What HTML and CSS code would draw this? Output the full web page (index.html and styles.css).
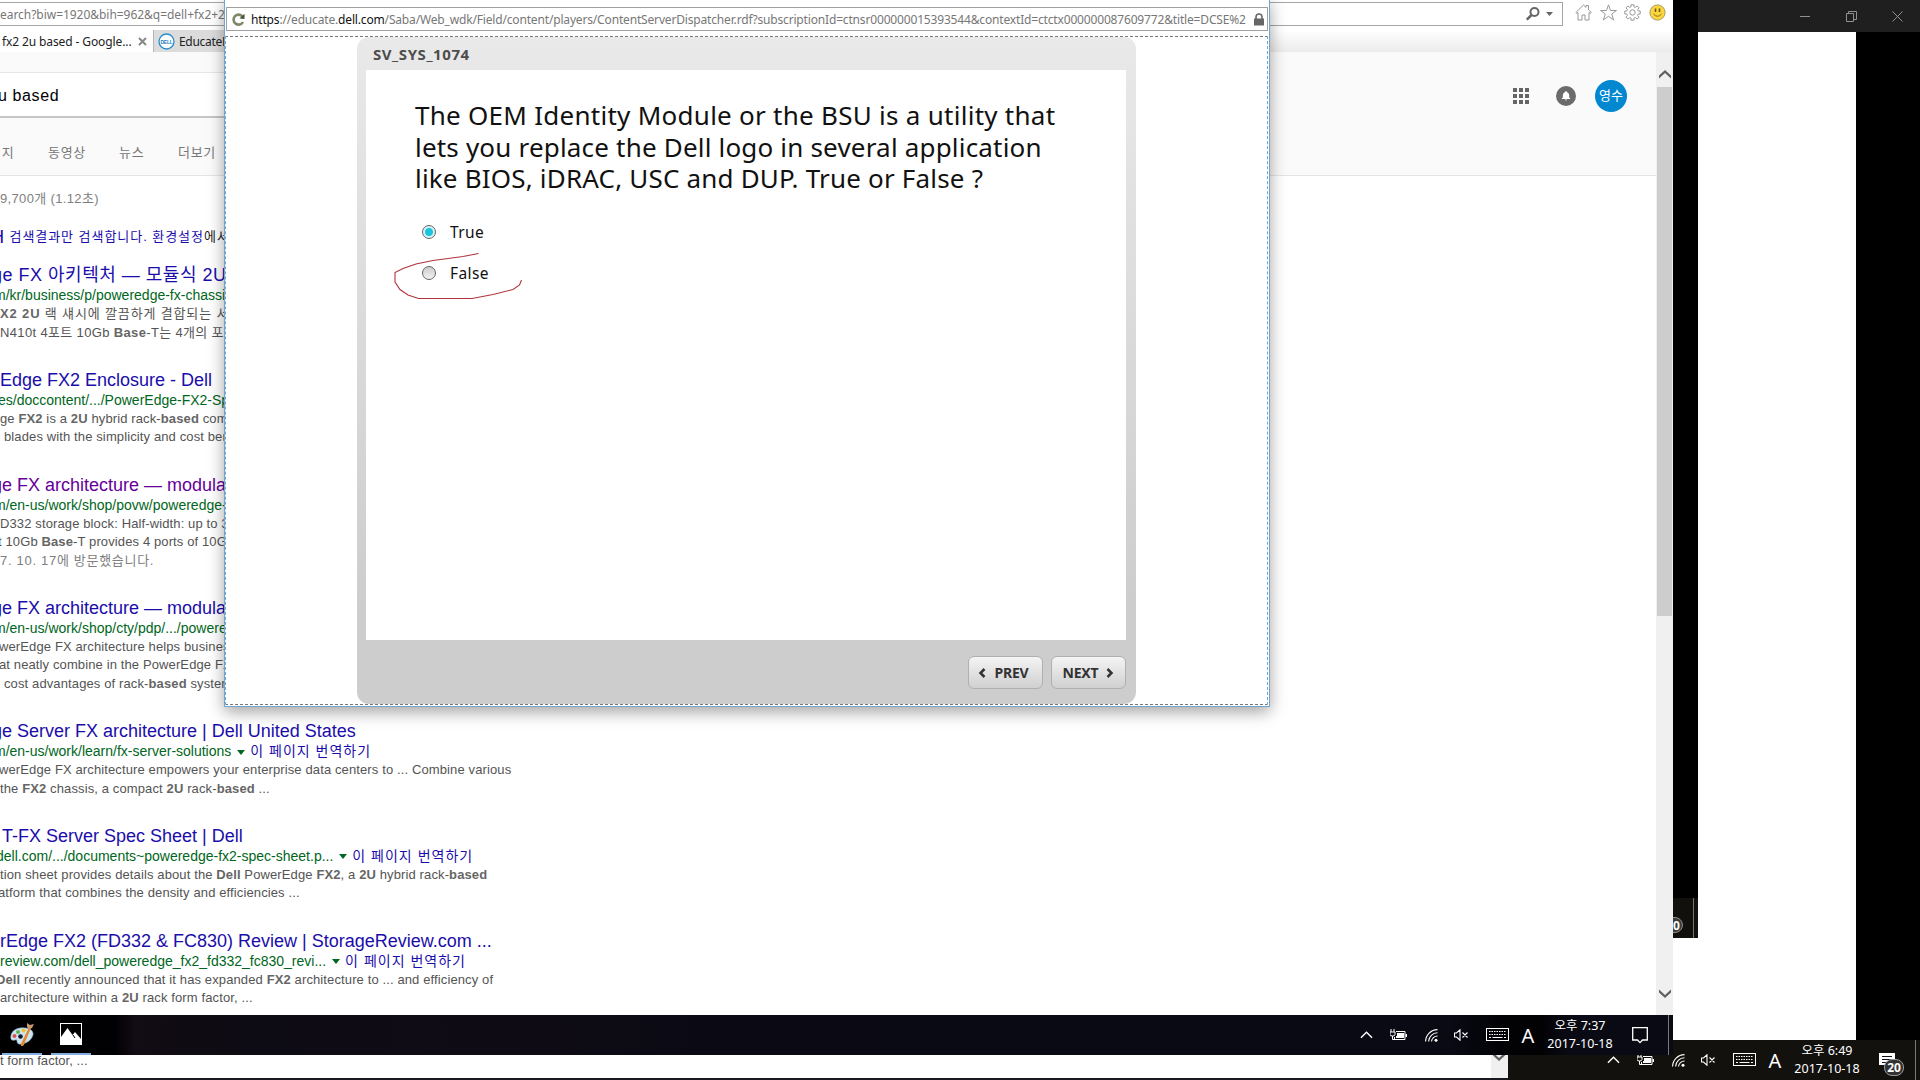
FILE: index.html
```html
<!DOCTYPE html>
<html lang="ko">
<head>
<meta charset="utf-8">
<title>SV_SYS_1074</title>
<link rel="stylesheet" href="styles.css">
</head>
<body>
<svg width="0" height="0" class="defs">
  <symbol id="chev" viewBox="0 0 14 8"><path d="M1 7 7 1l6 6" fill="none" stroke="#fff" stroke-width="1.5"/></symbol>
  <symbol id="battery" viewBox="0 0 17 12"><path d="M1 0v3M4 0v3M0 3h5v2.500q0 1.500-2.500 1.500T0 5.500zM2.500 7v3.500H6" fill="none" stroke="#fff"/><path d="M6 2.500h9v8H4.500V8" fill="none" stroke="#fff"/><path d="M7 4h7v5H6V7h1zM15.500 5h1.500v3h-1.500z" fill="#fff"/></symbol>
  <symbol id="wifi" viewBox="0 0 13 13"><g fill="none" stroke="#fff" stroke-width="1.100"><path d="M.6 12.500A12 12 0 0 1 12.500.6M3.600 12.500A9 9 0 0 1 12.500 3.800M6.500 12.500A6 6 0 0 1 12.500 7"/></g><circle cx="11" cy="11.200" r="1.500" fill="#fff"/></symbol>
  <symbol id="mute" viewBox="0 0 15 12"><path d="M.5 4h2L6 .8v10.400L2.500 8h-2zM8.500 3.500l5 5m0-5-5 5" fill="none" stroke="#fff" stroke-width="1.100"/></symbol>
  <symbol id="keyb" viewBox="0 0 23 13"><rect x=".5" y=".5" width="22" height="12" fill="none" stroke="#fff"/><path d="M3 3.500h17M3 6.500h17" stroke="#fff" stroke-dasharray="1.500 1"/><path d="M3 9.500h2M6.500 9.500h10M18 9.500h2" stroke="#fff"/></symbol>
  <symbol id="down" viewBox="0 0 12 9"><path d="M0 .5 6 6 12 .5V3.500L6 9 0 3.500z" fill="#606060"/></symbol>
</svg>

<div class="desktop">
  <section class="viewer">
    <div class="viewer-bar">
      <svg width="11" height="11" viewBox="0 0 11 11"><path d="M0 5.500h10"/></svg>
      <svg width="11" height="11" viewBox="0 0 11 11"><path d="M.5 2.500h7v8h-7zM2.500 2.500v-2h8v8h-3"/></svg>
      <svg width="11" height="11" viewBox="0 0 11 11"><path d="M.5.5l10 10m0-10-10 10"/></svg>
    </div>
    <div class="viewer-page"></div>
  </section>
  <div class="fill"></div>
  <div class="sliver"><span class="sliver-badge">20</span></div>

  <div class="under">
    <div class="under-page">t form factor, ...</div>
    <div class="under-scroll"><svg width="12" height="9"><use href="#down"/></svg></div>
  </div>

  <footer class="taskbar outer">
    <div class="tray">
      <span class="c-chev"><svg width="13" height="8"><use href="#chev"/></svg></span>
      <span class="c-batt"><svg width="17" height="12"><use href="#battery"/></svg></span>
      <span class="c-wifi"><svg width="13" height="13"><use href="#wifi"/></svg></span>
      <span class="c-mute"><svg width="15" height="12"><use href="#mute"/></svg></span>
      <span class="c-keyb"><svg width="23" height="13"><use href="#keyb"/></svg></span>
      <span class="c-ime">A</span>
      <span class="c-clock"><span>오후 6:49</span><span>2017-10-18</span></span>
      <span class="c-note"><svg width="16" height="17" viewBox="0 0 16 17"><path d="M0 1h16v12h-5l-3 3v-3H0z" fill="#fff"/><path d="M3 4.500h10M3 7.500h10M3 10.500h5" stroke="#111"/></svg><b class="badge">20</b></span>
      <span class="c-end"></span>
    </div>
  </footer>

  <section class="browser">
    <header class="ie-bar">
      <div class="ie-address">
        <span class="ie-url">earch?biw=1920&amp;bih=962&amp;q=dell+fx2+2</span>
        <svg class="mag" width="14" height="14" viewBox="0 0 14 14"><circle cx="8.500" cy="5" r="4" fill="none" stroke="#666" stroke-width="2"/><path d="M5.500 8 .8 12.700" stroke="#666" stroke-width="2.500"/></svg>
        <svg width="8" height="4" viewBox="0 0 8 4"><path d="M0 0h7L3.500 4z" fill="#666"/></svg>
      </div>
      <div class="ie-tools">
        <svg width="17" height="17" viewBox="0 0 17 17"><path d="M.8 8.500 8.500 1l2.500 2.400V1.500h2.500V5.800l2.800 2.700-1.200.9-1.100-.9v7.500h-4v-5H7v5H3V8.500l-1.200.9z"/></svg>
        <svg width="17" height="17" viewBox="0 0 17 17"><path d="M8.500.8l2 5.700h6L11.700 10l1.900 5.900-5.100-3.600-5.100 3.600L5.300 10 .5 6.500h6z"/></svg>
        <svg width="17" height="17" viewBox="0 0 17 17"><path d="M7 .8h3v2l1.500.6 1.600-1.500 2 2-1.500 1.600.6 1.500h2v3h-2l-.6 1.500 1.500 1.600-2 2-1.600-1.500-1.500.6v2H7v-2l-1.500-.6-1.600 1.500-2-2 1.500-1.600L2.800 10h-2V7h2l.6-1.500-1.500-1.600 2-2 1.600 1.500L7 2.800z"/><circle cx="8.500" cy="8.500" r="2.700"/></svg>
        <svg class="smile" width="17" height="17" viewBox="0 0 17 17"><circle cx="8.500" cy="8.500" r="7.600"/><path d="M6.500 4.500v3.500M10.500 4.500v3.500" class="eyes"/><path d="M4.500 10q4 4.500 8 0"/></svg>
      </div>
    </header>
    <nav class="tabs">
      <div class="tab active"><span>fx2 2u based - Google...</span><svg width="9" height="9" viewBox="0 0 9 9"><path d="M1 1l7 7m0-7-7 7" stroke="#888" stroke-width="2"/></svg></div>
      <div class="tab"><svg width="17" height="17" viewBox="0 0 17 17"><circle cx="8.500" cy="8.500" r="7.500" fill="#fff" stroke="#2a8fcc" stroke-width="1.300"/><text x="8.500" y="10.500" text-anchor="middle" class="dell">DELL</text></svg><span>EducateD</span></div>
    </nav>
    <div class="view">
      <main class="page">
        <div class="g-head">
          <div class="g-search">u based</div>
          <div class="g-nav"><span class="n1">미지</span><span class="n2">동영상</span><span class="n3">뉴스</span><span>더보기</span></div>
          <div class="g-user">
            <svg width="16" height="16" viewBox="0 0 16 16"><path d="M0 0h4v4H0zM6 0h4v4H6zM12 0h4v4h-4zM0 6h4v4H0zM6 6h4v4H6zM12 6h4v4h-4zM0 12h4v4H0zM6 12h4v4H6zM12 12h4v4h-4z" fill="#666"/></svg>
            <svg width="20" height="20" viewBox="0 0 20 20"><circle cx="10" cy="10" r="10" fill="#6b6b6b"/><path d="M10 5q.8 0 .8.900 2.400.6 2.400 3.300v2.300l1 1v.6H5.800v-.6l1-1V9.200q0-2.700 2.400-3.300 0-.9.800-.9zM9 13.500h2q0 1-1 1t-1-1z" fill="#fff"/></svg>
            <span class="avatar">영수</span>
          </div>
        </div>
        <div class="stats">9,700개 (1.12초)</div>
        <div class="notice"><b>어</b> <a>검색결과만 검색합니다.</a> <a>환경설정</a>에서</div>
        <div class="results">
          <article class="r1"><h3 class="cut8 ko">ge FX 아키텍처 — 모듈식 2U</h3><cite class="cut6">m/kr/business/p/poweredge-fx-chassis</cite><p class="ko"><b>X2 2U</b> 랙 섀시에 깔끔하게 결합되는 서</p><p class="ko2">N410t 4포트 10Gb <b>Base</b>-T는 4개의 포</p></article>
          <article class="r2"><h3>Edge FX2 Enclosure - Dell</h3><cite class="cut2">es/doccontent/.../PowerEdge-FX2-Sp</cite><p>ge <b>FX2</b> is a <b>2U</b> hybrid rack-<b>based</b> com</p><p class="s4">blades with the simplicity and cost ben</p></article>
          <article class="r3"><h3 class="cut8 seen">ge FX architecture — modula</h3><cite class="cut6">m/en-us/work/shop/povw/poweredge-</cite><p>D332 storage block: Half-width: up to 3</p><p class="cut2">t 10Gb <b>Base</b>-T provides 4 ports of 10G</p><p class="visit">7. 10. 17에 방문했습니다.</p></article>
          <article class="r4"><h3 class="cut8">ge FX architecture — modula</h3><cite class="cut6">m/en-us/work/shop/cty/pdp/.../powere</cite><p class="cut1">werEdge FX architecture helps busines</p><p class="cut1">at neatly combine in the PowerEdge FX</p><p class="s4">cost advantages of rack-<b>based</b> system</p></article>
          <article class="r5"><h3 class="cut8">ge Server FX architecture | Dell United States</h3><cite class="cut6">m/en-us/work/learn/fx-server-solutions <i></i><a>이 페이지 번역하기</a></cite><p class="cut1">werEdge FX architecture empowers your enterprise data centers to ... Combine various</p><p>the <b>FX2</b> chassis, a compact <b>2U</b> rack-<b>based</b> ...</p></article>
          <article class="r6"><h3 class="s2">T-FX Server Spec Sheet | Dell</h3><cite class="cut4">dell.com/.../documents~poweredge-fx2-spec-sheet.p... <i></i><a>이 페이지 번역하기</a></cite><p>tion sheet provides details about the <b>Dell</b> PowerEdge <b>FX2</b>, a <b>2U</b> hybrid rack-<b>based</b></p><p class="cut2">atform that combines the density and efficiencies ...</p></article>
          <article class="r7"><h3>rEdge FX2 (FD332 &amp; FC830) Review | StorageReview.com ...</h3><cite>review.com/dell_poweredge_fx2_fd332_fc830_revi... <i></i><a>이 페이지 번역하기</a></cite><p class="cut4"><b>Dell</b> recently announced that it has expanded <b>FX2</b> architecture to ... and efficiency of</p><p>architecture within a <b>2U</b> rack form factor, ...</p></article>
        </div>
      </main>
      <aside class="scroll"><svg class="up" width="12" height="9"><use href="#down"/></svg><div class="thumb"></div><svg class="dn" width="12" height="9"><use href="#down"/></svg></aside>
    </div>
    <footer class="taskbar inner">
      <div class="apps">
        <span class="app"><svg width="24" height="24" viewBox="0 0 24 24"><path d="M10 6C3 7 0 12 1 17q1 2 4 1 2-1 2 1 0 4 5 3 9-2 11-9c1-5-5-8-13-7z" fill="#cfe4f3" stroke="#7fa9c9" stroke-width=".6"/><circle cx="4.500" cy="14" r="2" fill="#d9534a"/><circle cx="8" cy="10" r="2" fill="#62b05a"/><circle cx="13.500" cy="8.500" r="2" fill="#f2c230"/><circle cx="10.500" cy="14.500" r="2.300" fill="#10182c"/><path d="M20.500 4.500 13 22.500l-1 1 .2-2z" fill="#e08a34" stroke="#e08a34" stroke-width="2"/><path d="M17 1l3 2 4-1-2 4-3 1-2-2z" fill="#c79a72"/></svg></span>
        <span class="app"><svg width="22" height="22" viewBox="0 0 22 22"><rect x=".5" y=".5" width="21" height="21" fill="none" stroke="#fff"/><path d="M1 14 7.500 5l5 7 2.500-3 6 7v5H1z" fill="#fff"/><path d="M13 12l2 3" stroke="#000"/></svg></span>
      </div>
      <div class="tray">
        <span class="c-chev"><svg width="13" height="8"><use href="#chev"/></svg></span>
        <span class="c-batt"><svg width="17" height="12"><use href="#battery"/></svg></span>
        <span class="c-wifi"><svg width="13" height="13"><use href="#wifi"/></svg></span>
        <span class="c-mute"><svg width="15" height="12"><use href="#mute"/></svg></span>
        <span class="c-keyb"><svg width="23" height="13"><use href="#keyb"/></svg></span>
        <span class="c-ime">A</span>
        <span class="c-clock"><span>오후 7:37</span><span>2017-10-18</span></span>
        <span class="c-note"><svg width="16" height="17" viewBox="0 0 16 17"><path d="M.7.7h14.600v12.300h-4.800L8 15.600 5.500 13H.7z" fill="none" stroke="#fff" stroke-width="1.300"/></svg></span>
        <span class="c-end"></span>
      </div>
    </footer>
  </section>

  <section class="popup">
    <div class="pop-address">
      <svg width="13" height="13" viewBox="0 0 13 13"><path d="M10.500 3.500A5 5 0 1 0 11 9" fill="none" stroke="#7d8a68" stroke-width="2.600"/><path d="M7.500 5.500 12.500 6V.8z" fill="#48533c"/></svg>
      <span class="pop-url"><em>https</em>://educate.<em>dell.com</em>/Saba/Web_wdk/Field/content/players/ContentServerDispatcher.rdf?subscriptionId=ctnsr000000015393544&amp;contextId=ctctx000000087609772&amp;title=DCSE%2</span>
      <svg width="10" height="13" viewBox="0 0 10 13"><path d="M0 5.500h10V12.500H0z" fill="#666"/><path d="M2 6V4a3 3 0 0 1 6 0v2" fill="none" stroke="#666" stroke-width="1.600"/></svg>
    </div>
    <div class="pop-view">
      <div class="player">
        <h1>SV_SYS_1074</h1>
        <div class="sheet">
          <h2><span>The OEM Identity Module or the BSU is a utility that</span><span class="tight">lets you replace the Dell logo in several application</span><span class="tight">like BIOS, iDRAC, USC and DUP. True or False ?</span></h2>
          <div class="choice"><i class="radio on"></i>True</div>
          <div class="choice"><i class="radio"></i>False</div>
        </div>
        <div class="buttons">
          <button><svg width="8" height="10" viewBox="0 0 8 10"><path d="M6.500 1 2.500 5l4 4"/></svg><span>PREV</span></button>
          <button><span>NEXT</span><svg width="8" height="10" viewBox="0 0 8 10"><path d="M1.500 1l4 4-4 4"/></svg></button>
        </div>
      </div>
    </div>
  </section>
  <svg class="ink" width="130" height="50" viewBox="0 0 130 50"><path d="M84.500 1.500 69 4.500 39 8.500 22 12 9 16.500 1 20.500V30L6 37.500 14 43 24.500 46.500H78L99 42.500 119 37.500 125.500 33 127.500 28"/></svg>
</div>
</body>
</html>
```
FILE: styles.css
```css
* { box-sizing: border-box; margin: 0; padding: 0; }
body { width: 1920px; height: 1080px; overflow: hidden; background: #000; font-family: "Liberation Sans", "Noto Sans CJK KR", sans-serif; }
svg { display: block; flex: none; }
.defs { position: absolute; }
.desktop { position: relative; width: 1920px; height: 1080px; overflow: hidden; background: #000; }

/* picture viewer behind everything */
.viewer { position: absolute; left: 1698px; top: 0; width: 222px; height: 1040px; display: flex; flex-direction: column; }
.viewer-bar { height: 32px; background: #1f1f1f; display: flex; justify-content: flex-end; align-items: center; gap: 35px; padding-right: 17px; }
.viewer-bar path { fill: none; stroke: #909090; }
.viewer-page { flex: 1; width: 158px; background: #fff; }
.fill { position: absolute; left: 1673px; top: 938px; width: 25px; height: 102px; background: #fff; }
.sliver { position: absolute; left: 1673px; top: 898px; width: 25px; height: 40px; background: linear-gradient(90deg, transparent 20px, #77736c 20px, #77736c 21px, transparent 21px), #11100d; overflow: hidden; }
.sliver-badge { display: flex; align-items: center; justify-content: center; width: 20px; height: 16px; margin: 19px 0 0 -10px; border: 1px solid #8c8c8c; border-radius: 8px; background: #3c3c3c; color: #fff; font: bold 12px "Noto Sans", sans-serif; }

.under { position: absolute; left: 0; top: 1055px; width: 1508px; height: 25px; display: flex; border-bottom: 2px solid #1a1920; }
.under-page { flex: 1; background: #fff; color: #545454; font-size: 13px; line-height: 12px; letter-spacing: .05px; }
.under-scroll { width: 17px; background: #f0f0f0; padding: 0 2px; overflow: hidden; }
.under-scroll svg { margin-top: -3px; }

/* taskbars */
.taskbar { height: 40px; display: flex; justify-content: space-between; color: #fff; font-family: "Noto Sans", "Noto Sans CJK KR", sans-serif; }
.outer { position: absolute; left: 1508px; top: 1040px; width: 412px; justify-content: flex-end; background: #12110e; }
.inner { flex: none; background: linear-gradient(90deg, #000 0, #010103 115px, #120c14 135px, #0d0b13 250px, #100c15 420px, #0b0a14 700px, #090a14 1450px, #020205 1500px, #020205 1540px, #0a0a14 1570px, #0a0a14 100%); }
.tray { display: flex; height: 40px; }
.tray > span { display: flex; align-items: center; justify-content: center; }
.c-chev { width: 14px; }
.c-batt { width: 50px; }
.c-wifi { width: 16px; padding-top: 1px; }
.c-mute { width: 44px; }
.c-keyb { width: 29px; padding-bottom: 1px; }
.c-ime { width: 32px; font-size: 20px; }
.tray > .c-clock { width: 72px; flex-direction: column; font-size: 12.5px; line-height: 18px; padding-bottom: 1px; white-space: nowrap; }
.c-note { width: 48px; position: relative; }
.c-end { width: 5px; border-right: 1px solid #77777c; margin-right: 4px; }
.badge { position: absolute; left: 21px; top: 19px; width: 20px; height: 17px; border: 1px solid #999; border-radius: 8px; background: #333; font-size: 12px; line-height: 15px; text-align: center; }
.apps { display: flex; gap: 9px; padding-left: 2px; }
.app { width: 40px; height: 40px; display: flex; align-items: center; justify-content: center; border-bottom: 2px solid #82addf; }

/* Explorer window */
.browser { position: absolute; left: 0; top: 0; width: 1673px; height: 1055px; display: flex; flex-direction: column; background: #fff; overflow: hidden; }
.ie-bar { height: 30px; padding-top: 2px; display: flex; }
.ie-address { width: 1563px; height: 24px; border: 1px solid #a5a5a5; border-left: 0; display: flex; align-items: center; gap: 6px; padding-right: 8px; }
.ie-url { flex: 1; font: 12px/22px "Noto Sans", sans-serif; color: #777; padding-top: 1px; letter-spacing: -.04px; }
.ie-tools { display: flex; gap: 7.5px; padding: 2px 0 0 12px; }
.ie-tools path, .ie-tools circle { fill: none; stroke: #999; }
.ie-tools .smile circle { fill: #fcd53f; stroke: #a89a60; }
.ie-tools .smile path { stroke: #8a6c10; }
.ie-tools .smile .eyes { stroke: #6b5a1a; stroke-width: 1.6; }
.tabs { height: 22px; display: flex; background: linear-gradient(#fff, #ebebeb); font: 12px/23px "Noto Sans", sans-serif; color: #222; }
.tab { display: flex; align-items: center; gap: 4px; width: 150px; padding-left: 4px; background: #dcdcdc; border-left: 1px solid #b5b5b5; white-space: nowrap; letter-spacing: -.3px; }
.tab.active { width: 153px; padding-left: 2px; gap: 7px; background: #fff; border: 0; letter-spacing: -.11px; }
.dell { font: bold 5px "Liberation Sans", sans-serif; fill: #1b80c0; }
.view { flex: 1; display: flex; min-height: 0; }
.page { flex: 1; overflow: hidden; white-space: nowrap; font-size: 13px; }
.scroll { width: 17px; background: #f0f0f0; display: flex; flex-direction: column; align-items: center; }
.up { transform: rotate(180deg); margin: 18px 0 8px; }
.thumb { width: 15px; height: 529px; background: #cdcdcd; }
.dn { margin: auto 0 17px; }

.g-head { height: 124px; background: #fafafa; border-bottom: 1px solid #e5e5e5; display: grid; grid-template: 66px 57px / 700px 1fr; }
.g-search { margin-top: 20px; height: 46px; padding-top: 13px; background: #fff; border-top: 1px solid #e6e6e6; border-bottom: 2px solid #c6c6c6; font: 16px/20px "Liberation Sans", sans-serif; letter-spacing: .6px; text-indent: -2px; color: #000; }
.g-nav { grid-row: 2; display: flex; padding-top: 25px; color: #777; line-height: 20px; font-size: 13px; letter-spacing: .7px; }
.n1 { margin-left: -11px; width: 59px; }
.n2 { width: 71px; }
.n3 { width: 59px; }
.g-user { grid-row: 1; grid-column: 2; display: flex; justify-content: flex-end; align-items: center; gap: 27px; padding: 22px 29px 0 0; }
.avatar { margin-left: -8px; width: 32px; height: 32px; border-radius: 50%; background: #0288d1; color: #fff; font-size: 13px; line-height: 31px; text-align: center; }
.stats { height: 20px; margin-top: 13px; line-height: 20px; color: #808080; letter-spacing: .35px; }
.notice { margin-top: 18px; line-height: 20px; height: 20px; color: #222; font-size: 13px; letter-spacing: .95px; }
.notice b { margin-left: -8px; color: #1a0dab; }
.notice a, cite a { color: #1a0dab; }
.results { padding-top: 18px; }
article { margin-bottom: 27.8px; }
h3 { font-weight: 400; font-size: 18px; line-height: 21px; color: #1a0dab; }
h3.ko { letter-spacing: .5px; }
.seen { color: #609; }
cite { display: flex; height: 19px; align-items: baseline; font-style: normal; font-size: 14px; line-height: 19px; color: #006621; }
cite i { align-self: center; margin: 1px 5px 0 6px; border: 4px solid transparent; border-top: 5px solid #006621; border-bottom: 0; }
cite a { letter-spacing: 1px; }
p { font-size: 13px; line-height: 18.5px; color: #545454; letter-spacing: .12px; }
p b { color: #666; }
p.ko { letter-spacing: .85px; }
p.ko2 { letter-spacing: .35px; }
p.visit { color: #808080; letter-spacing: .7px; }
.cut8 { margin-left: -8px; }
.cut6 { margin-left: -6px; }
.cut4 { margin-left: -4px; }
.cut2 { margin-left: -2px; }
.cut1 { margin-left: -1px; }
.s2 { margin-left: 2px; }
.s4 { margin-left: 4px; }

/* course popup */
.popup { position: absolute; left: 224px; top: -2px; width: 1046px; height: 709px; background: #fff; border: 1px solid #6fa5cf; box-shadow: 0 5px 15px rgba(0,0,0,.36); display: flex; flex-direction: column; padding: 8px 1px 1px 0; }
.pop-address { height: 24px; flex: none; margin-left: 1px; border: 1px solid #a0a0a0; display: flex; align-items: center; gap: 6px; padding: 0 3px 0 5px; }
.pop-url { flex: 1; font: 12px/22px "Noto Sans", sans-serif; color: #777; white-space: nowrap; overflow: hidden; padding-top: 1px; letter-spacing: -.165px; }
.pop-url em { font-style: normal; color: #111; }
.pop-view { flex: 1; margin-top: 5px; border: 1px dashed #777; border-left-color: #6fa5cf; border-right-color: #6fa5cf; padding-left: 131px; }
.player { width: 779px; height: 667px; border-radius: 12px; background: linear-gradient(#e9e9e9, #cdcdcd 85%); padding: 0 10px 0 9px; display: flex; flex-direction: column; font-family: "Noto Sans", sans-serif; }
.player h1 { height: 33px; padding-left: 7px; font-size: 15px; line-height: 34px; letter-spacing: .55px; color: #4d4d4d; }
.sheet { height: 570px; background: #fff; padding: 30px 0 0 49px; }
.sheet h2 { font-weight: 400; font-size: 26px; line-height: 31.7px; letter-spacing: .27px; color: #111; display: flex; flex-direction: column; white-space: nowrap; height: 111px; }
.tight { letter-spacing: .19px; }
.choice { display: flex; align-items: center; gap: 14px; height: 41.5px; padding-left: 7px; font-size: 15.5px; letter-spacing: .4px; color: #111; }
.radio { width: 14px; height: 14px; border-radius: 50%; border: 1px solid #666; background: linear-gradient(#ccc, #f2f2f2); }
.radio.on { background: radial-gradient(#19c4dc 3.500px, #d5f2f6 4.500px); }
.buttons { display: flex; justify-content: flex-end; gap: 8px; padding-top: 16px; }
button { width: 75px; height: 33px; border: 1px solid #b0b0b0; border-radius: 6px; background: linear-gradient(#f4f4f4, #d0d0d0); display: flex; align-items: center; justify-content: center; gap: 8px; font: bold 14px "Noto Sans", sans-serif; color: #333; letter-spacing: -.2px; }
button:first-child { padding-right: 4px; }
button path { fill: none; stroke: #333; stroke-width: 2.500; }
.ink { position: absolute; left: 394px; top: 252px; }
.ink path { fill: none; stroke: #b0343c; stroke-width: 1.100; }
```
